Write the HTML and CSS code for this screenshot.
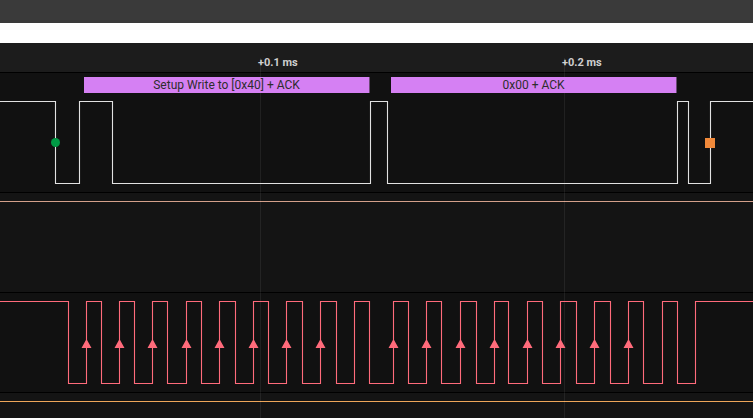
FILE: index.html
```html
<!DOCTYPE html>
<html>
<head>
<meta charset="utf-8">
<link rel="stylesheet" href="styles.css">
</head>
<body>
<div class="app">
  <div class="topbar"></div>
  <div class="whiteband"></div>
  <div class="ruler">
    <span class="tick t1">+0.1 ms</span>
    <span class="tick t2">+0.2 ms</span>
  </div>
  <div class="channel ch-sda">
    <div class="anno a1">Setup Write to [0x40] + ACK</div>
    <div class="anno a2">0x00 + ACK</div>
    <svg class="wave" width="753" height="119" viewBox="0 0 753 119">
      <polyline class="sda" points="0,28.5 55.5,28.5 55.5,110.5 79.5,110.5 79.5,28.5 112.5,28.5 112.5,110.5 370.5,110.5 370.5,28.5 387.5,28.5 387.5,110.5 677.5,110.5 677.5,28.5 688.5,28.5 688.5,110.5 710.5,110.5 710.5,28.5 753,28.5"/>
      <circle class="start" cx="55.5" cy="69.5" r="4.5"/>
      <rect class="stop" x="705" y="65" width="10" height="10"/>
    </svg>
  </div>
  <div class="channel ch-mid">
    <div class="flat flat-tan"></div>
  </div>
  <div class="channel ch-scl">
    <svg class="wave" width="753" height="99" viewBox="0 0 753 99">
      <polyline class="scl" points="0,8.5 68.5,8.5 68.5,90.5 86.5,90.5 86.5,8.5 101.5,8.5 101.5,90.5 119.5,90.5 119.5,8.5 134.5,8.5 134.5,90.5 152.5,90.5 152.5,8.5 167.5,8.5 167.5,90.5 186.5,90.5 186.5,8.5 201.5,8.5 201.5,90.5 219.5,90.5 219.5,8.5 235.5,8.5 235.5,90.5 253.5,90.5 253.5,8.5 268.5,8.5 268.5,90.5 286.5,90.5 286.5,8.5 302.5,8.5 302.5,90.5 320.5,90.5 320.5,8.5 336.5,8.5 336.5,90.5 354.5,90.5 354.5,8.5 369.5,8.5 369.5,90.5 393.5,90.5 393.5,8.5 408.5,8.5 408.5,90.5 426.5,90.5 426.5,8.5 441.5,8.5 441.5,90.5 460.5,90.5 460.5,8.5 476.5,8.5 476.5,90.5 494.5,90.5 494.5,8.5 508.5,8.5 508.5,90.5 527.5,90.5 527.5,8.5 542.5,8.5 542.5,90.5 560.5,90.5 560.5,8.5 576.5,8.5 576.5,90.5 594.5,90.5 594.5,8.5 610.5,8.5 610.5,90.5 628.5,90.5 628.5,8.5 643.5,8.5 643.5,90.5 662.5,90.5 662.5,8.5 677.5,8.5 677.5,90.5 695.5,90.5 695.5,8.5 753,8.5"/>
      <path class="arrows" d="M81.5,55L86.5,46L91.5,55Z M114.5,55L119.5,46L124.5,55Z M147.5,55L152.5,46L157.5,55Z M181.5,55L186.5,46L191.5,55Z M214.5,55L219.5,46L224.5,55Z M248.5,55L253.5,46L258.5,55Z M281.5,55L286.5,46L291.5,55Z M315.5,55L320.5,46L325.5,55Z M388.5,55L393.5,46L398.5,55Z M421.5,55L426.5,46L431.5,55Z M455.5,55L460.5,46L465.5,55Z M489.5,55L494.5,46L499.5,55Z M522.5,55L527.5,46L532.5,55Z M555.5,55L560.5,46L565.5,55Z M589.5,55L594.5,46L599.5,55Z M623.5,55L628.5,46L633.5,55Z"/>
    </svg>
  </div>
  <div class="channel ch-last">
    <div class="flat flat-orange"></div>
  </div>
  <div class="grid">
    <div class="gline g1"></div>
    <div class="gline g2"></div>
  </div>
</div>
</body>
</html>
```

FILE: styles.css
```css
html, body {
  margin: 0;
  padding: 0;
  background: #111111;
  overflow: hidden;
}
.app {
  position: relative;
  width: 753px;
  height: 418px;
  display: flex;
  flex-direction: column;
  font-family: Roboto, "Liberation Sans", sans-serif;
}
.topbar {
  height: 23px;
  background: #3a3a3a;
  flex: none;
}
.whiteband {
  height: 20px;
  background: #ffffff;
  flex: none;
}
.ruler {
  position: relative;
  height: 29px;
  background: #1c1c1c;
  border-bottom: 1px solid #000;
  flex: none;
}
.tick {
  position: absolute;
  top: 13px;
  font-size: 11px;
  font-weight: 700;
  color: #cfcfcf;
  line-height: 13px;
  z-index: 2;
}
.t1 { left: 258px; }
.t2 { left: 562px; }
.channel {
  position: relative;
  flex: none;
  border-bottom: 1px solid #000;
}
.ch-sda { height: 119px; background: #111111; }
.ch-mid { height: 99px; background: #141414; }
.ch-scl { height: 99px; background: #111111; }
.ch-last { flex: 1; background: #141414; border-bottom: none; }
.wave {
  display: block;
  position: relative;
  z-index: 3;
}
.sda {
  fill: none;
  stroke: #e2e2e2;
  stroke-width: 1.1;
}
.scl {
  fill: none;
  stroke: #ff6b7b;
  stroke-width: 1.1;
}
.arrows { fill: #ff6b7b; }
.start { fill: #009944; }
.stop { fill: #f0893a; }
.anno {
  position: absolute;
  top: 4px;
  height: 16px;
  width: 286px;
  background: #d580f3;
  color: #2e2e2e;
  font-size: 12px;
  line-height: 16px;
  text-align: center;
  z-index: 4;
  box-sizing: border-box;
  border-right: 1px solid #6a4a74;
}
.a1 { left: 84px; }
.a2 { left: 391px; }
.flat {
  margin-top: 8px;
  height: 1px;
}
.flat-tan { background: #d4a08a; }
.flat-orange { background: #eea65a; }
.grid {
  position: absolute;
  top: 58px;
  left: 0;
  right: 0;
  bottom: 0;
  pointer-events: none;
  z-index: 2;
}
.gline {
  position: absolute;
  top: 0;
  bottom: 0;
  width: 1px;
  background: rgba(255, 255, 255, 0.07);
}
.g1 { left: 260px; }
.g2 { left: 564px; }
```
